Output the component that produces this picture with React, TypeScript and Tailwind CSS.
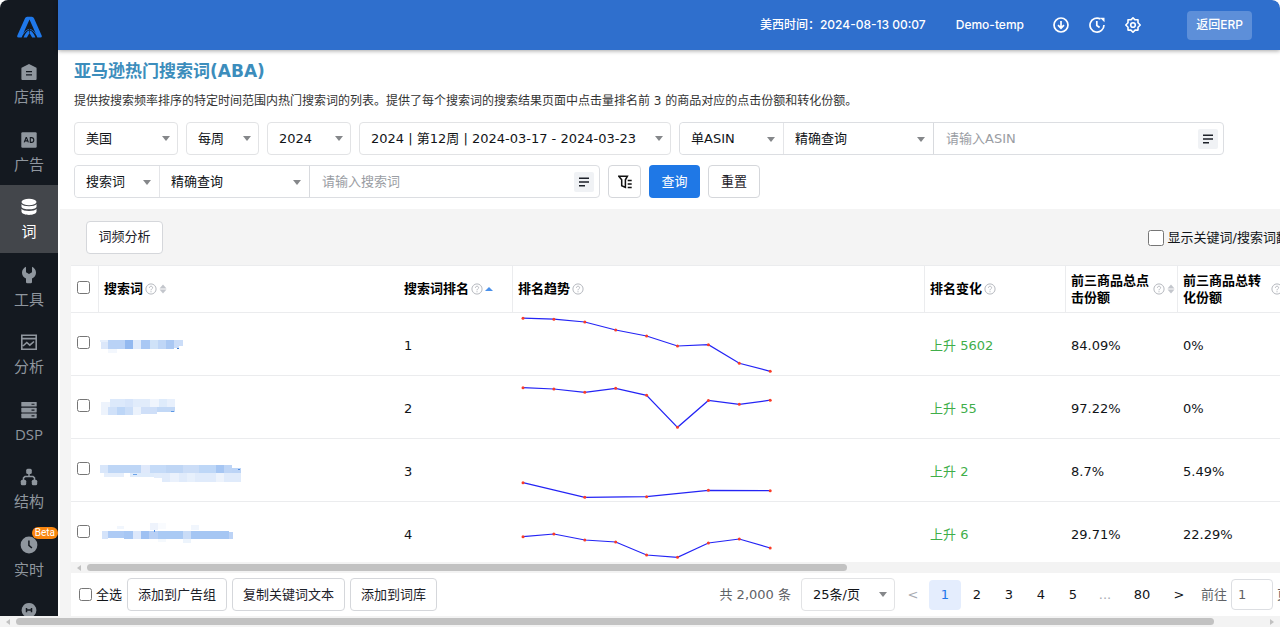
import React from 'react';

const FONT = "font-['DejaVu_Sans','Noto_Sans_CJK_SC',sans-serif]";
const INTER = "font-['Inter','Noto_Sans_CJK_SC',sans-serif]";

type Option = { label: string; className: string; grouped?: boolean; name: string };

function Select({ label, className, grouped, name }: Option) {
  return (
    <div className={`relative shrink-0 ${className}`}>
      <select
        aria-label={name}
        className={`h-full w-full cursor-pointer appearance-none bg-white pr-6 text-[13px] text-[#111418] outline-none ${
          grouped ? 'rounded-l-[4px] pl-[11px]' : 'rounded-[4px] border border-[#e2e3e5] pl-[11px]'
        }`}
      >
        <option>{label}</option>
      </select>
      <svg viewBox="0 0 8 5" className="pointer-events-none absolute top-[14px] right-2 h-[5px] w-2 fill-[#85878a]">
        <path d="M0 0h8L4 5z" />
      </svg>
    </div>
  );
}

function SearchGroup({ type, typeClass, hint, id }: { type: string; typeClass: string; hint: string; id: string }) {
  return (
    <div className="flex h-[33px] shrink-0 rounded-[4px] border border-[#dcdee2]">
      <Select name={`${id}类型`} label={type} grouped className={typeClass} />
      <div className="w-px bg-[#e4e5e8]" />
      <Select name={`${id}匹配`} label="精确查询" grouped className="w-[149px]" />
      <div className="w-px bg-[#d8dade]" />
      <div className="flex w-[289px] items-center pr-[5px]">
        <input
          aria-label={hint}
          placeholder={hint}
          className="min-w-0 flex-1 bg-transparent pl-3 text-[13px] text-[#1d2129] outline-none placeholder:text-[#9a9da3]"
        />
        <button aria-label="批量输入" className="flex h-5 w-5 items-center justify-center rounded-[2px] bg-[#f0f2f5]">
          <svg viewBox="0 0 12 10" className="h-[10px] w-3" stroke="#1d2129" strokeWidth="1.6">
            <path d="M1 1.2h10M1 5h10M1 8.8h6" />
          </svg>
        </button>
      </div>
    </div>
  );
}

const sideIcons: Record<string, React.ReactNode> = {
  shop: (
    <>
      <path d="M9 1 2 4.5a1 1 0 0 0-.6.9V16a1 1 0 0 0 1 1h13.200a1 1 0 0 0 1-1V5.400a1 1 0 0 0-.6-.9z" />
      <path d="M6 8.700h6M6 11.900h6" stroke="#141920" strokeWidth="1.300" />
    </>
  ),
  ad: (
    <>
      <rect x="1.300" y="1.300" width="15.400" height="15.400" rx="1.200" />
      <g fill="none" stroke="#141920" strokeWidth="1.100">
        <path d="m4.200 11.400 1.900-4.800h.4l1.900 4.800M4.900 9.900h2.900M10.300 6.600v4.800h1.100c3.200 0 3.200-4.800 0-4.800z" />
      </g>
    </>
  ),
  data: (
    <>
      <ellipse cx="9" cy="4" rx="7.500" ry="3.200" />
      <path d="M1.500 5.900c1.500 3 13.500 3 15 0v3c-1.200 3.200-13.800 3.200-15 0z" />
      <path d="M1.500 10.800c1.500 3 13.500 3 15 0v3c-1.200 4.200-13.800 4.200-15 0z" />
    </>
  ),
  tool: <path d="M6 .8v5.400l3 1.700 3-1.700V.8c2.500 1.100 4 3.300 4 6 0 2.500-1.500 4.600-4 5.700V16a1.300 1.300 0 0 1-1.300 1.300H7.300A1.300 1.300 0 0 1 6 16v-3.500c-2.500-1.100-4-3.200-4-5.700 0-2.700 1.500-4.900 4-6z" />,
  chart: (
    <g fill="none" stroke="currentColor" strokeWidth="1.600">
      <path d="M1.800 12V2.300h14.400V12M1.800 5.600h14.400M1 16.200h16M3 13l3.800-3.500 3 2.700 4.200-3.700M1.800 11v5M16.200 11v5" />
    </g>
  ),
  server: (
    <>
      <rect x="1.300" y="1" width="15.400" height="4.600" rx=".6" />
      <rect x="1.300" y="6.800" width="15.400" height="4.600" rx=".6" />
      <rect x="1.300" y="12.600" width="15.400" height="4.600" rx=".6" />
      <path d="M11.500 3.300h3M11.500 9.100h3M11.500 14.900h3" stroke="#141920" strokeWidth="1.100" />
    </>
  ),
  tree: (
    <>
      <rect x="6.200" y=".8" width="5.600" height="5.200" rx="1.500" />
      <rect x=".8" y="11.800" width="5.400" height="5.400" rx="1.500" />
      <rect x="11.800" y="11.800" width="5.400" height="5.400" rx="1.500" />
      <path d="M9 5v4M3.500 12.500V9.800L5 8.600h8l1.500 1.200v2.700" fill="none" stroke="currentColor" strokeWidth="1.500" />
    </>
  ),
  clock: (
    <>
      <circle cx="9" cy="9" r="8.400" />
      <path d="M8.900 4.400v5l3 2.600" fill="none" stroke="#141920" strokeWidth="1.500" />
    </>
  ),
  face: (
    <>
      <path d="M9 0a7.300 7.300 0 0 1 5.400 12.200L9 17l-5.400-4.800A7.300 7.300 0 0 1 9 0z" />
      <path d="M6.500 5v4.200M11.500 5v4.200M6.500 7.100h5" fill="none" stroke="#141920" strokeWidth="1.500" />
    </>
  ),
};

const menu = [
  { icon: 'shop', label: '店铺' },
  { icon: 'ad', label: '广告' },
  { icon: 'data', label: '词', active: true },
  { icon: 'tool', label: '工具' },
  { icon: 'chart', label: '分析' },
  { icon: 'server', label: 'DSP' },
  { icon: 'tree', label: '结构' },
  { icon: 'clock', label: '实时', beta: true },
  { icon: 'face', label: '' },
];

function Sidebar() {
  return (
    <aside className="flex w-[58px] shrink-0 flex-col overflow-hidden bg-[#141920]">
      <a href="#" aria-label="首页" className="flex h-[50px] shrink-0 items-center justify-center pt-[3px]">
        <svg viewBox="0 0 76 66" className="h-[22px] w-[25px]">
          <path d="M31 2h14q5 0 7 5l23 52q2 6-4 6H62Q54 46 38 40 22 46 14 65H5q-6 0-4-6L24 7q2-5 7-5z" fill="#1f78ea" />
          <path d="M38 10 18 55Q25 41 38 38q13 3 20 17z" fill="#141920" />
          <path d="M38 43c-9 3-14 12-18 22h10l8-14 8 14h10c-4-10-9-19-18-22z" fill="#1f78ea" />
          <path d="M38 37v14" stroke="#141920" strokeWidth="2" />
        </svg>
      </a>
      <nav className="grid h-[608px] shrink-0 grid-rows-9">
        {menu.map((m) => (
          <a
            key={m.icon}
            href="#"
            aria-label={m.label || '客服'}
            className={`relative flex flex-col items-center gap-[5px] pt-[13px] ${
              m.active ? 'bg-[#43464b] text-white' : 'text-[#8f969e]'
            }`}
          >
            <svg viewBox="0 0 18 18" className="h-[18px] w-[18px] shrink-0 fill-current">
              {sideIcons[m.icon]}
            </svg>
            {m.label && (
              <span className="font-['Open_Sans','Noto_Sans_CJK_SC',sans-serif] text-[15px] leading-5">{m.label}</span>
            )}
            {m.beta && (
              <span className="absolute top-1 right-0 rounded-full bg-[#f98610] px-[3px] font-['Roboto',sans-serif] text-[10px] leading-3 text-white">
                Beta
              </span>
            )}
          </a>
        ))}
      </nav>
    </aside>
  );
}

function TopBar() {
  return (
    <header
      className={`relative z-10 flex h-[50px] shrink-0 items-center justify-end rounded-tr-[8px] bg-[#2f6fcd] pr-7 text-[12px] font-medium text-white shadow-[0_1px_4px_rgba(0,0,0,0.35)] ${INTER}`}
    >
      <span>美西时间：2024-08-13 00:07</span>
      <span className="ml-[30px]">Demo-temp</span>
      <div className="ml-[29px] flex gap-5">
        <button aria-label="下载">
          <svg viewBox="0 0 16 16" className="h-4 w-4" fill="none" stroke="white" strokeWidth="1.700">
            <circle cx="8" cy="8" r="7" />
            <path d="M8 4v7M5 8.200l3 3 3-3" />
          </svg>
        </button>
        <button aria-label="历史">
          <svg viewBox="0 0 16 16" className="h-4 w-4" fill="none" stroke="white" strokeWidth="1.700">
            <path d="M11.500 2A7 7 0 1 0 15 8" />
            <path d="M7.800 4v4.500l2.800 2" />
            <path d="M11 .8h4.500v4.500z" fill="white" stroke="none" />
          </svg>
        </button>
        <button aria-label="设置">
          <svg viewBox="0 0 16 16" className="h-4 w-4" fill="none" stroke="white" strokeWidth="1.600" strokeLinejoin="round">
            <path d="m8 .8 2.100 2H13v3l2.200 2.200L13 10.200v2.900h-2.900L8 15.200l-2.100-2.100H3v-2.900L.8 8 3 5.800v-3h2.900z" />
            <circle cx="8" cy="8" r="2.300" />
          </svg>
        </button>
      </div>
      <button className="ml-[46px] h-[29px] w-[65px] rounded-[4px] bg-[#5d8fd9]">返回ERP</button>
    </header>
  );
}

const Help = () => (
  <svg viewBox="0 0 12 12" className="h-3 w-3 shrink-0" fill="none" stroke="#b6b9bf">
    <circle cx="6" cy="6" r="5.100" strokeWidth="1" />
    <path d="M4.400 4.800c0-2.100 3.200-2.100 3.200-.1C7.600 5.900 6 6 6 7.300M6 8.200v1.100" strokeWidth="1" />
  </svg>
);

const Sort = ({ up }: { up?: boolean }) => (
  <svg viewBox="0 0 8 10" className="h-[10px] w-2 shrink-0" fill="#c3c6cc">
    {up ? <path d="M0 7h8L4 3z" fill="#4a90ea" /> : <path d="M.5 4.400h7L4 .6zM.5 5.600h7L4 9.400z" />}
  </svg>
);

type Block = [number, number, number, number, string];

const rows: { rank: string; change: string; click: string; conv: string; points: [number, number][]; blocks: Block[] }[] = [
  {
    rank: '1',
    change: '上升 5602',
    click: '84.09%',
    conv: '0%',
    points: [[0, 5.2], [1, 6.2], [2, 9], [3, 17], [4, 23], [5, 33], [6, 31.7], [7, 50.3], [8, 58.3]],
    blocks: [
      [0, 27, 8, 2, '#e6effc'], [1, 29, 7, 7, '#dbe7fa'], [8, 27, 8, 9, '#b9d2f6'], [16, 27, 9, 9, '#b9d2f6'],
      [25, 27, 8, 9, '#93b9f0'], [33, 27, 8, 9, '#e0ebfb'], [41, 27, 9, 9, '#a9c8f4'], [50, 27, 8, 9, '#cfe2f8'],
      [58, 27, 8, 9, '#bfd6f6'], [66, 27, 8, 9, '#aac8f3'], [74, 27, 9, 6, '#cbddf8'], [74, 33, 5, 2, '#cbddf8'],
      [8, 36, 9, 4, '#f3f7fd'], [77, 35, 2, 1, '#3f7fd6'],
    ],
  },
  {
    rank: '2',
    change: '上升 55',
    click: '97.22%',
    conv: '0%',
    points: [[0, 11.7], [1, 13], [2, 16.3], [3, 12.3], [4, 19.3], [5, 51.3], [6, 24.5], [7, 28.3], [8, 24.2]],
    blocks: [
      [1, 26, 9, 13, '#edf3fc'], [10, 23, 15, 8, '#dce9fb'], [25, 23, 8, 8, '#d7e5fa'], [33, 23, 17, 8, '#e1ecfb'],
      [50, 23, 9, 13, '#f0f5fd'], [59, 23, 8, 8, '#deebfb'], [67, 23, 8, 8, '#e8f0fc'], [8, 31, 9, 8, '#d0e1f9'],
      [17, 31, 8, 8, '#bdd6f7'], [25, 31, 8, 8, '#cbdef8'], [33, 31, 8, 8, '#ebf2fc'], [41, 31, 16, 7, '#cfdff8'],
      [57, 31, 18, 5, '#c2d8f6'], [71, 35, 3, 1, '#5b97e4'],
    ],
  },
  {
    rank: '3',
    change: '上升 2',
    click: '8.7%',
    conv: '5.49%',
    points: [[0, 43.7], [2, 58.3], [4, 57.7], [6, 51.3], [8, 51.7]],
    blocks: [
      [0, 26, 8, 8, '#d8e6fa'], [8, 26, 33, 8, '#bed6f6'], [41, 26, 9, 8, '#dfe9fb'], [50, 26, 16, 8, '#c5dbf8'],
      [66, 26, 17, 8, '#bfd6f5'], [83, 26, 16, 8, '#cbddf7'], [99, 26, 17, 8, '#bed7f7'], [116, 26, 8, 8, '#a6c6f3'],
      [124, 26, 8, 8, '#bed5f6'], [132, 29, 9, 5, '#bcd4f6'], [4, 34, 20, 4, '#e5eefb'], [30, 34, 24, 4, '#deebfb'],
      [54, 34, 12, 5, '#e1ecfb'], [62, 34, 79, 9, '#e0ebfb'], [70, 34, 9, 9, '#eaf1fc'], [87, 34, 8, 9, '#e7f0fc'],
      [116, 34, 8, 9, '#edf3fc'], [33, 35, 4, 1, '#6ba4ea'], [138, 30, 2, 1, '#4b8ae0'],
    ],
  },
  {
    rank: '4',
    change: '上升 6',
    click: '29.71%',
    conv: '22.29%',
    points: [[0, 34.7], [1, 32], [2, 38], [3, 40], [4, 53], [5, 55.3], [6, 41], [7, 37], [8, 46]],
    blocks: [
      [2, 29, 6, 8, '#d4e3fa'], [8, 29, 16, 7, '#aecbf5'], [24, 29, 9, 8, '#a7c7f4'], [33, 29, 8, 8, '#dde8fb'],
      [41, 29, 8, 8, '#9fc1f2'], [49, 29, 9, 8, '#b8d0f5'], [58, 29, 25, 8, '#aacaf4'], [83, 29, 8, 8, '#c9dcf7'],
      [91, 29, 38, 8, '#a5c6f3'], [129, 30, 4, 7, '#bcd3f6'], [17, 24, 7, 3, '#f1f6fd'], [50, 21, 8, 7, '#eef3fc'],
      [58, 21, 8, 6, '#f9fbfe'], [91, 23, 8, 5, '#f1f6fd'], [83, 37, 8, 4, '#edf4fc'], [58, 37, 8, 3, '#f5f9fd'],
      [54, 28, 1, 2, '#4f8fe6'],
    ],
  },
];

function Trend({ points }: { points: [number, number][] }) {
  const xy = points.map(([i, y]) => [10 + i * 30.9, y]);
  return (
    <svg viewBox="0 0 411 62" className="block h-[62px] w-[411px]">
      <polyline points={xy.map((p) => p.join(',')).join(' ')} fill="none" stroke="#2424f5" strokeWidth="1.200" />
      {xy.map(([x, y]) => (
        <circle key={x} cx={x} cy={y} r="1.500" fill="#fa3c28" />
      ))}
    </svg>
  );
}

const th = 'border-b border-[#ebecee] bg-white text-left font-bold';
const split = 'border-r border-r-[#ebecee]';
const cell = 'pt-[3px] pb-0';

function DataTable() {
  return (
    <table className="w-full table-fixed border-separate border-spacing-0 bg-white text-[13px] text-[#111418]">
      <colgroup>
        <col className="w-7" />
        <col className="w-[299px]" />
        <col className="w-[115px]" />
        <col className="w-[412px]" />
        <col className="w-[141px]" />
        <col className="w-[112px]" />
        <col />
      </colgroup>
      <thead>
        <tr className="h-12 text-black">
          <th className={`${th} ${split} border-t pb-1 pl-[6px]`}>
            <input type="checkbox" aria-label="选择全部行" className="block h-[13px] w-[13px]" />
          </th>
          <th className={`${th} border-t pl-[5px]`}>
            <span className="flex items-center gap-[2px]">搜索词<Help /><Sort /></span>
          </th>
          <th className={`${th} ${split} border-t pl-[6px]`}>
            <span className="flex items-center gap-[2px] whitespace-nowrap">搜索词排名<Help /><Sort up /></span>
          </th>
          <th className={`${th} ${split} border-t pl-[5px]`}>
            <span className="flex items-center gap-[2px]">排名趋势<Help /></span>
          </th>
          <th className={`${th} ${split} border-t pl-[5px]`}>
            <span className="flex items-center gap-[2px]">排名变化<Help /></span>
          </th>
          <th className={`${th} ${split} border-t pl-[5px]`}>
            <span className="flex items-center gap-[2px] leading-[17px]">
              <span className="w-20">前三商品总点击份额</span><Help /><Sort />
            </span>
          </th>
          <th className={`${th} border-t pl-[5px]`}>
            <span className="flex items-center gap-2 leading-[17px]">
              <span className="w-20">前三商品总转化份额</span><Help />
            </span>
          </th>
        </tr>
      </thead>
      <tbody className="[&_td]:border-b [&_td]:border-[#ebecee]">
        {rows.map((r) => (
          <tr key={r.rank} className="h-[63px]">
            <td className="pb-1 pl-[6px]">
              <input type="checkbox" aria-label={`选择第${r.rank}行`} className="block h-[13px] w-[13px]" />
            </td>
            <td className="p-0 pl-[1px]">
              <svg viewBox="0 0 145 62" className="block h-[62px] w-[145px]" shapeRendering="crispEdges">
                {r.blocks.map(([x, y, w, h, fill], i) => (
                  <rect key={i} x={x} y={y} width={w} height={h} fill={fill} />
                ))}
              </svg>
            </td>
            <td className={`${cell} pl-[6px]`}>{r.rank}</td>
            <td className="p-0"><Trend points={r.points} /></td>
            <td className={`${cell} pl-[5px] text-[#3fae4a]`}>{r.change}</td>
            <td className={`${cell} pl-[5px]`}>{r.click}</td>
            <td className={`${cell} pl-[5px]`}>{r.conv}</td>
          </tr>
        ))}
      </tbody>
    </table>
  );
}

const plainButton = 'h-[33px] shrink-0 rounded-[4px] border border-[#d5d7db] bg-white px-[10px] text-[#1d2129]';

function Pager() {
  return (
    <div className="flex items-center">
      <span className="mr-[10px] text-[#606266]">共 2,000 条</span>
      <Select name="每页条数" label="25条/页" className="h-[33px] w-[94px]" />
      <button className="ml-[2px] w-8 text-[#a8abb2]">&lt;</button>
      <button className="h-[30px] w-8 rounded-[4px] bg-[#e4edfd] text-[#1f78ea]">1</button>
      {['2', '3', '4', '5'].map((n) => (
        <button key={n} className="w-8">{n}</button>
      ))}
      <span className="w-8 text-center text-[#a8abb2]">...</span>
      <button className="w-[42px]">80</button>
      <button className="w-8">&gt;</button>
      <label className="ml-[6px] flex items-center gap-1 text-[#606266]">
        前往
        <input defaultValue="1" className="h-[31px] w-[42px] rounded-[4px] border border-[#dcdee2] bg-white px-[6px] outline-none" />
        页
      </label>
    </div>
  );
}

function Scrollbar({ thumb, end }: { thumb: string; end?: boolean }) {
  return (
    <div className="flex h-[11px] shrink-0 items-center bg-[#f3f3f3] px-[6px]">
      <svg viewBox="0 0 4 6" className="h-[6px] w-1 fill-[#c1c1c1]"><path d="M4 0v6L0 3z" /></svg>
      <div className="mx-[6px] flex-1">
        <div className={`h-[7px] rounded-full bg-[#c2c2c2] ${thumb}`} />
      </div>
      {end && <svg viewBox="0 0 4 6" className="h-[6px] w-1 fill-[#c1c1c1]"><path d="M0 0v6l4-3z" /></svg>}
    </div>
  );
}

export default function App() {
  return (
    <div className={`flex h-screen flex-col overflow-hidden rounded-t-[8px] bg-white text-[13px] text-[#111418] ${FONT}`}>
      <div className="flex min-h-0 flex-1">
        <Sidebar />
        <div className="flex min-w-0 flex-1 flex-col">
          <TopBar />
          <main className="min-h-0 flex-1 overflow-hidden border-l-2 border-white">
            <div className="flex h-full min-w-[1278px] flex-col bg-[#f4f4f4]">
              <section className="bg-white px-[14px] pt-[11px] pb-[11px]">
                <h1 className="text-[17px] leading-5 font-bold text-[#3c8dbc]">亚马逊热门搜索词(ABA)</h1>
                <p className="mt-[10px] text-[12px] leading-5 text-[#333]">
                  提供按搜索频率排序的特定时间范围内热门搜索词的列表。提供了每个搜索词的搜索结果页面中点击量排名前 3 的商品对应的点击份额和转化份额。
                </p>
                <div className="mt-[11px] flex flex-wrap gap-x-2 gap-y-[10px]">
                  <Select name="站点" label="美国" className="h-[33px] w-[104px]" />
                  <Select name="周期" label="每周" className="h-[33px] w-[73px]" />
                  <Select name="年份" label="2024" className="h-[33px] w-[84px]" />
                  <Select name="日期" label="2024 | 第12周 | 2024-03-17 - 2024-03-23" className="h-[33px] w-[312px]" />
                  <SearchGroup id="ASIN" type="单ASIN" typeClass="w-[103px]" hint="请输入ASIN" />
                  <SearchGroup id="搜索词" type="搜索词" typeClass="w-[84px]" hint="请输入搜索词" />
                  <button aria-label="高级筛选" className={`${plainButton} flex w-[33px] items-center justify-center`}>
                    <svg viewBox="0 0 14 14" className="h-[14px] w-[14px] shrink-0" fill="none" stroke="#111" strokeWidth="1.500">
                      <path d="M.8 1.200h8.600L7.400 4.800v7.600l-3.700-1.700V4.800z" />
                      <path d="M9.700 5.500h4M9.700 9h4M9.700 12.500h4" />
                    </svg>
                  </button>
                  <button className="h-[33px] w-[51px] rounded-[4px] bg-[#1f78e6] text-white">查询</button>
                  <button className={`${plainButton} w-[52px]`}>重置</button>
                </div>
              </section>
              <div className="flex h-14 shrink-0 items-center justify-between pr-9 pl-[26px]">
                <button className={`${plainButton} w-[77px]`}>词频分析</button>
                <label className="flex items-center gap-1 pt-[2px]">
                  <input type="checkbox" className="h-4 w-4" />
                  显示关键词/搜索词翻译
                </label>
              </div>
              <div className="ml-[11px] flex min-h-0 flex-1 flex-col bg-white">
                <div className="min-h-0 flex-1 overflow-hidden">
                  <DataTable />
                </div>
                <Scrollbar thumb="w-[760px]" />
                <footer className="flex h-[43px] shrink-0 items-center justify-between pr-12 pl-2">
                  <div className="flex items-center gap-[5px]">
                    <label className="flex items-center gap-1">
                      <input type="checkbox" className="h-[13px] w-[13px]" />
                      全选
                    </label>
                    <button className={plainButton}>添加到广告组</button>
                    <button className={plainButton}>复制关键词文本</button>
                    <button className={plainButton}>添加到词库</button>
                  </div>
                  <Pager />
                </footer>
              </div>
            </div>
          </main>
        </div>
      </div>
      <Scrollbar thumb="w-[96%]" end />
    </div>
  );
}
